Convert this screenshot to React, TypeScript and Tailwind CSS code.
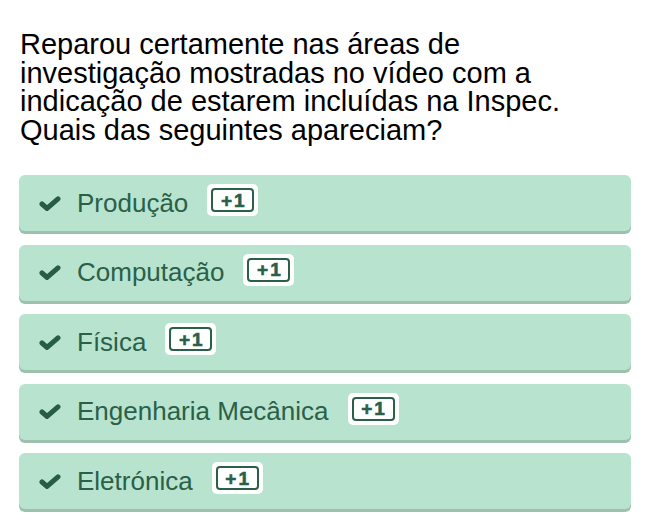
const options = [
  "Produção",
  "Computação",
  "Física",
  "Engenharia Mecânica",
  "Eletrónica",
];

function CheckIcon() {
  return (
    <svg width="22" height="15" viewBox="0 0 22 15" className="shrink-0">
      <polyline
        points="3,8 8,12.4 19,2.8"
        fill="none"
        stroke="#275d45"
        strokeWidth="5"
        strokeLinecap="round"
        strokeLinejoin="miter"
      />
    </svg>
  );
}

function Badge() {
  return (
    <span className="mb-[6px] ml-[19px] flex h-[32px] w-[51px] shrink-0 items-center justify-center rounded-[5px] bg-white">
      <span className="flex h-[24px] w-[43px] items-center justify-center rounded-[4px] border-[2.5px] border-[#2a6048]">
        <span className="pl-[2px] text-[19px] font-bold leading-none tracking-[2px] text-[#2a6048] [-webkit-text-stroke:0.6px_#2a6048]">
          +1
        </span>
      </span>
    </span>
  );
}

export default function App() {
  return (
    <div
      className="min-h-screen bg-white pl-[19px] pr-[17px] pt-[30px]"
      style={{ fontFamily: '"Liberation Sans", Arial, sans-serif' }}
    >
      <p className="w-[590px] pl-[1px] text-[29px] leading-[28.5px] text-black">
        Reparou certamente nas áreas de investigação mostradas no vídeo com a
        indicação de estarem incluídas na Inspec. Quais das seguintes
        apareciam?
      </p>

      <div className="mt-[31px] flex flex-col gap-[13.5px]">
        {options.map((label) => (
          <div
            key={label}
            className="flex h-[56px] items-center rounded-[6px] bg-[#b7e3cf] pl-[20px] shadow-[0_3px_0_#9dc1ae]"
          >
            <CheckIcon />
            <span className="ml-[16px] text-[26px] text-[#2a6048]">
              {label}
            </span>
            <Badge />
          </div>
        ))}
      </div>
    </div>
  );
}
